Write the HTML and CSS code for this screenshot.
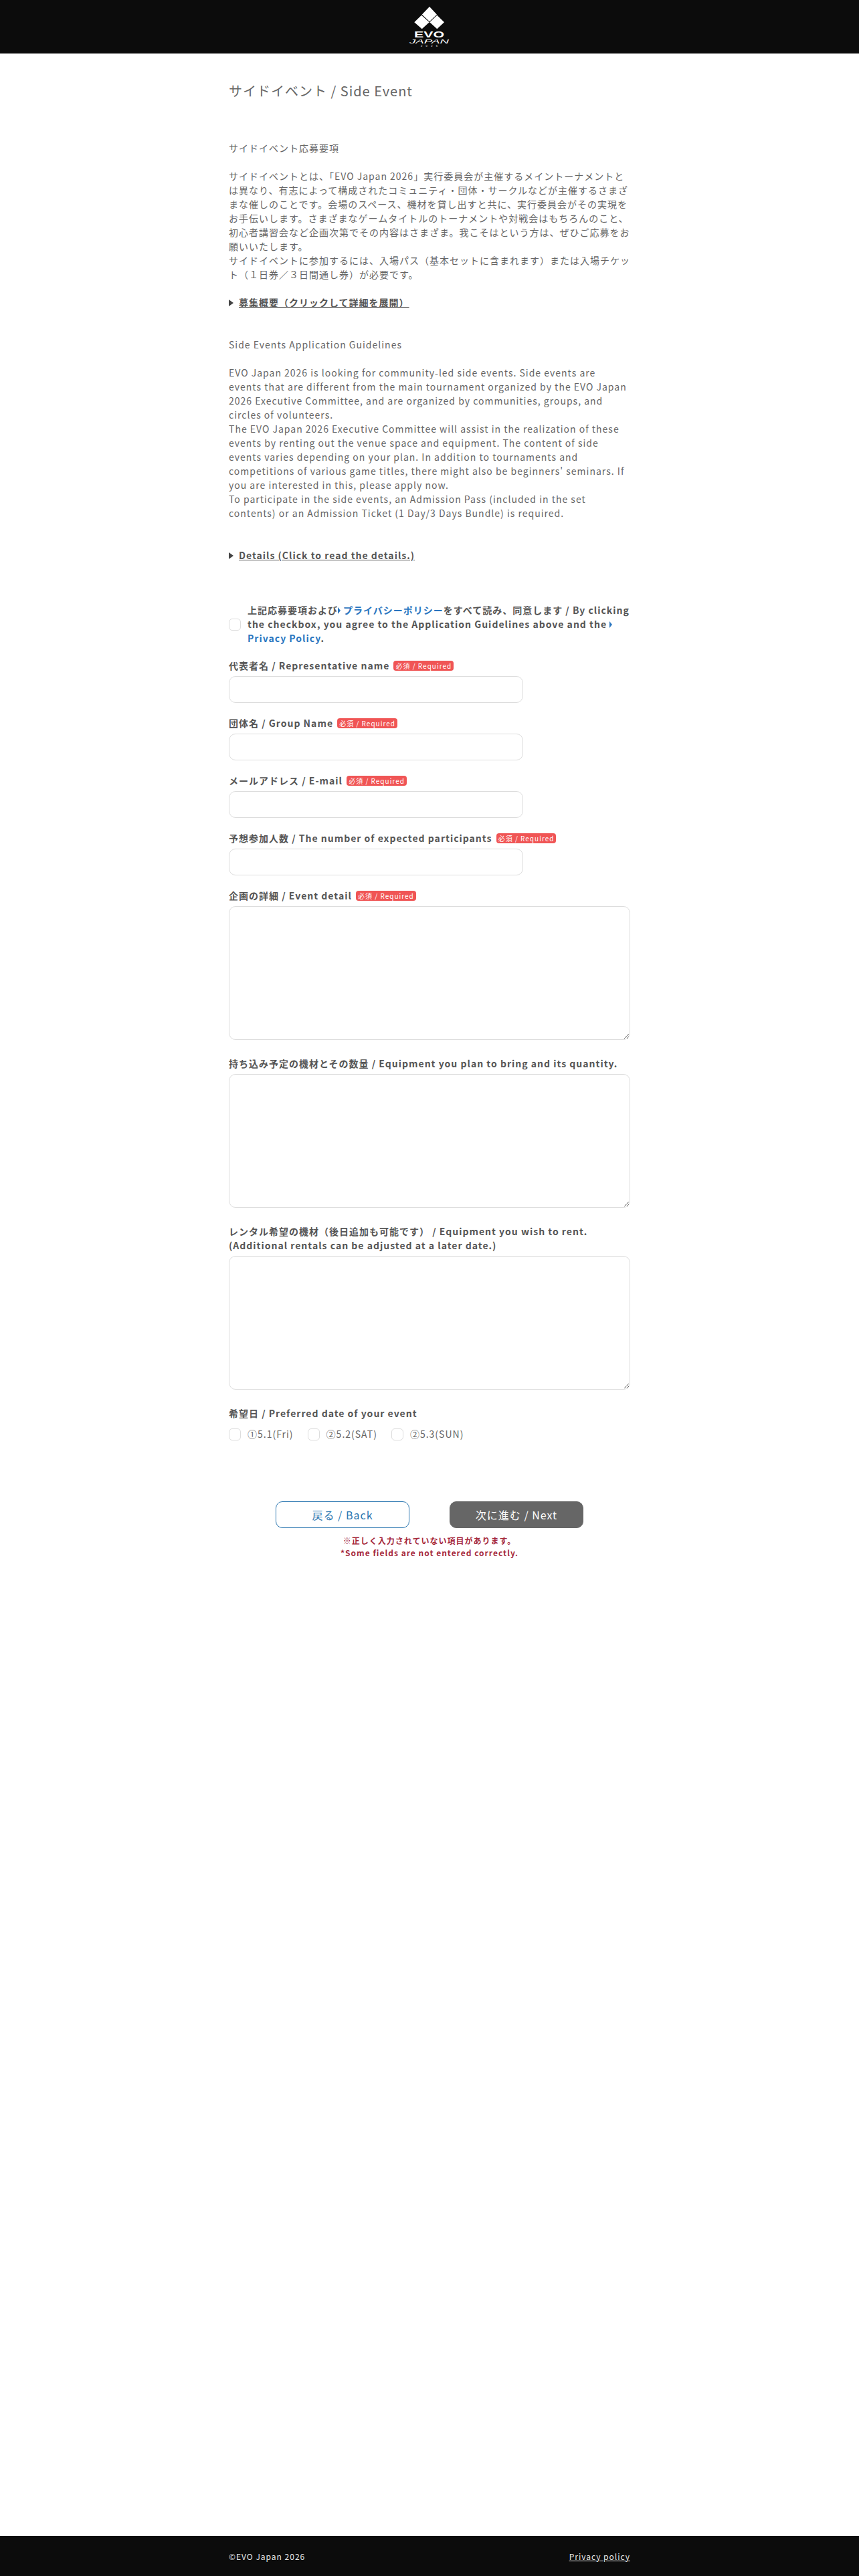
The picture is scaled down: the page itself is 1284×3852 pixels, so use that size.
FILE: index.html
```html
<!DOCTYPE html>
<html lang="ja">

<head>
    <meta charset="UTF-8">
    <title>サイドイベント / Side Event</title>
    <link rel="stylesheet" href="styles.css">
</head>

<body>

    <header class="site-header">
        <svg class="logo" width="64" height="64" viewBox="0 0 64 64" role="img" aria-label="EVO Japan 2026">
            <polygon points="32,2 43,13.700 32,24.300 20.700,13.700" fill="#fff" />
            <polygon points="20,14.700 9.300,25.300 20.700,35.300 31.700,25.300" fill="#fff" />
            <polygon points="43.300,14.700 54,25.300 43.300,35.300 32.300,25.300" fill="#fff" />
            <text x="31.500" y="48" class="logo-evo" textLength="45" lengthAdjust="spacingAndGlyphs" text-anchor="middle">EVO</text>
            <text x="31.500" y="57" class="logo-japan" textLength="59" lengthAdjust="spacingAndGlyphs" text-anchor="middle">JAPAN</text>
            <text x="31.500" y="62" class="logo-year" textLength="25" text-anchor="middle">2026</text>
        </svg>
    </header>

    <main class="content">
        <h1 class="page-title">サイドイベント / Side Event</h1>

        <p class="guideline">サイドイベント応募要項<br><br>サイドイベントとは、「EVO Japan 2026」実行委員会が主催するメイントーナメントとは異なり、有志によって構成されたコミュニティ・団体・サークルなどが主催するさまざまな催しのことです。会場のスペース、機材を貸し出すと共に、実行委員会がその実現をお手伝いします。さまざまなゲームタイトルのトーナメントや対戦会はもちろんのこと、初心者講習会など企画次第でその内容はさまざま。我こそはという方は、ぜひご応募をお願いいたします。<br>サイドイベントに参加するには、入場パス（基本セットに含まれます）または入場チケット（１日券／３日間通し券）が必要です。</p>

        <details class="more">
            <summary>募集概要（クリックして詳細を展開）</summary>
        </details>

        <p class="guideline guideline-en">Side Events Application Guidelines<br><br>EVO Japan 2026 is looking for community-led side events. Side events are events that are different from the main tournament organized by the EVO Japan 2026 Executive Committee, and are organized by communities, groups, and circles of volunteers.<br>The EVO Japan 2026 Executive Committee will assist in the realization of these events by renting out the venue space and equipment. The content of side events varies depending on your plan. In addition to tournaments and competitions of various game titles, there might also be beginners' seminars. If you are interested in this, please apply now.<br>To participate in the side events, an Admission Pass (included in the set contents) or an Admission Ticket (1 Day/3 Days Bundle) is required.</p>

        <details class="more">
            <summary>Details (Click to read the details.)</summary>
        </details>

        <form class="entry-form">
            <label class="consent">
                <input type="checkbox" class="check">
                <span>上記応募要項および<i class="policy-mark"></i><a href="#" class="policy-link">プライバシーポリシー</a>をすべて読み、同意します / By clicking the checkbox, you agree to the Application Guidelines above and the <i class="policy-mark"></i><a href="#" class="policy-link">Privacy Policy</a>.</span>
            </label>

            <div class="field">
                <label class="field-label">代表者名 / Representative name <span class="required">必須 / Required</span></label>
                <input type="text" class="text-input">
            </div>
            <div class="field">
                <label class="field-label">団体名 / Group Name <span class="required">必須 / Required</span></label>
                <input type="text" class="text-input">
            </div>
            <div class="field">
                <label class="field-label">メールアドレス / E-mail <span class="required">必須 / Required</span></label>
                <input type="email" class="text-input">
            </div>
            <div class="field">
                <label class="field-label">予想参加人数 / The number of expected participants <span class="required">必須 / Required</span></label>
                <input type="text" class="text-input">
            </div>
            <div class="field">
                <label class="field-label">企画の詳細 / Event detail <span class="required">必須 / Required</span></label>
                <textarea class="text-area"></textarea>
            </div>
            <div class="field">
                <label class="field-label">持ち込み予定の機材とその数量 / Equipment you plan to bring and its quantity.</label>
                <textarea class="text-area"></textarea>
            </div>
            <div class="field">
                <label class="field-label">レンタル希望の機材（後日追加も可能です） / Equipment you wish to rent.<br>(Additional rentals can be adjusted at a later date.)</label>
                <textarea class="text-area"></textarea>
            </div>
            <div class="field">
                <span class="field-label">希望日 / Preferred date of your event</span>
                <div class="date-options">
                    <label class="date-option"><input type="checkbox" class="check">①5.1(Fri)</label>
                    <label class="date-option"><input type="checkbox" class="check">②5.2(SAT)</label>
                    <label class="date-option"><input type="checkbox" class="check">②5.3(SUN)</label>
                </div>
            </div>

            <div class="actions">
                <button type="button" class="btn btn-back">戻る / Back</button>
                <button type="button" class="btn btn-next">次に進む / Next</button>
            </div>
            <p class="form-error">※正しく入力されていない項目があります。<br>*Some fields are not entered correctly.</p>
        </form>
    </main>

    <footer class="site-footer">
        <div class="footer-inner">
            <span>©EVO Japan 2026</span>
            <a href="#">Privacy policy</a>
        </div>
    </footer>
</body>

</html>
```

FILE: styles.css
```css
* {
    box-sizing: border-box;
}

body {
    margin: 0;
    min-height: 100vh;
    display: flex;
    flex-direction: column;
    font-family: "Noto Sans CJK JP", "Noto Sans", sans-serif;
    font-size: 14px;
    line-height: 21px;
    letter-spacing: 1px;
    color: #666;
    background-color: #fff;
}

.site-header {
    height: 80px;
    background-color: #0c0c0c;
    display: flex;
    justify-content: center;
    align-items: flex-start;
    padding-top: 8px;
}

.logo {
    display: block;
}

.logo text {
    fill: #fff;
    font-family: "Liberation Sans", sans-serif;
    letter-spacing: 0;
}

.logo-evo {
    font-size: 12.500px;
    font-weight: bold;
}

.logo-japan {
    font-size: 9.500px;
    font-style: italic;
}

.logo-year {
    font-size: 4px;
}

.content {
    width: 600px;
    margin: 0 auto;
    flex: 1;
}

.page-title {
    margin: 41px 0 60px;
    font-size: 20px;
    line-height: 30px;
    font-weight: 400;
}

.guideline {
    margin: 0 0 21px;
}

.guideline-en {
    margin-bottom: 42px;
}

.more {
    margin-bottom: 42px;
    font-weight: 700;
    color: #555;
}

.more summary {
    list-style: none;
    text-decoration: underline;
}

.more summary::before {
    content: "";
    display: inline-block;
    border-left: 7px solid #444;
    border-top: 5px solid transparent;
    border-bottom: 5px solid transparent;
    margin-right: 8px;
}

.entry-form {
    margin-top: 61px;
}

.consent {
    display: flex;
    align-items: center;
    gap: 10px;
    margin-bottom: 20px;
    font-weight: 700;
    color: #555;
}

.check {
    appearance: none;
    flex: none;
    width: 18px;
    height: 18px;
    margin: 0;
    border: 1px solid #ddd;
    border-radius: 5px;
    background-color: #fff;
}

.policy-link {
    color: #2a76c0;
    text-decoration: none;
}

.policy-mark {
    display: inline-block;
    border-left: 4px solid #2a76c0;
    border-top: 5px solid transparent;
    border-bottom: 5px solid transparent;
    margin-right: 4px;
}

.field {
    margin-bottom: 20px;
}

.field-label {
    display: block;
    margin-bottom: 5px;
    font-weight: 700;
    color: #555;
}

.required {
    display: inline-block;
    margin-left: 2px;
    padding: 0 3px;
    height: 15px;
    line-height: 15px;
    border-radius: 4px;
    font-size: 10px;
    font-weight: 400;
    color: #fff;
    background-color: #f05555;
    vertical-align: 1px;
}

.text-input {
    display: block;
    width: 440px;
    height: 40px;
    border: 1px solid #ddd;
    border-radius: 10px;
    background-color: #fff;
}

.text-area {
    width: 600px;
    height: 200px;
    border: 1px solid #ddd;
    border-radius: 10px;
    background-color: #fff;
}

.date-options {
    display: flex;
    gap: 21px;
    margin-top: 10px;
}

.date-option {
    display: flex;
    align-items: center;
    gap: 10px;
}

.actions {
    display: flex;
    justify-content: center;
    gap: 60px;
    margin-top: 90px;
}

.btn {
    width: 200px;
    height: 40px;
    border-radius: 10px;
    font-family: inherit;
    font-size: 16px;
    letter-spacing: 1px;
}

.btn-back {
    border: 1px solid #2a76b0;
    background-color: #fff;
    color: #2a76b0;
}

.btn-next {
    border: 1px solid #666;
    background-color: #666;
    color: #fff;
}

.form-error {
    margin: 10px 0 0;
    font-size: 12px;
    line-height: 18px;
    font-weight: 700;
    text-align: center;
    color: #a5283c;
}

.site-footer {
    height: 60px;
    background-color: #0c0c0c;
    color: #e8e8e8;
    font-size: 12px;
}

.footer-inner {
    width: 600px;
    height: 100%;
    margin: 0 auto;
    display: flex;
    justify-content: space-between;
    align-items: center;
}

.footer-inner a {
    color: #e8e8e8;
}
```
